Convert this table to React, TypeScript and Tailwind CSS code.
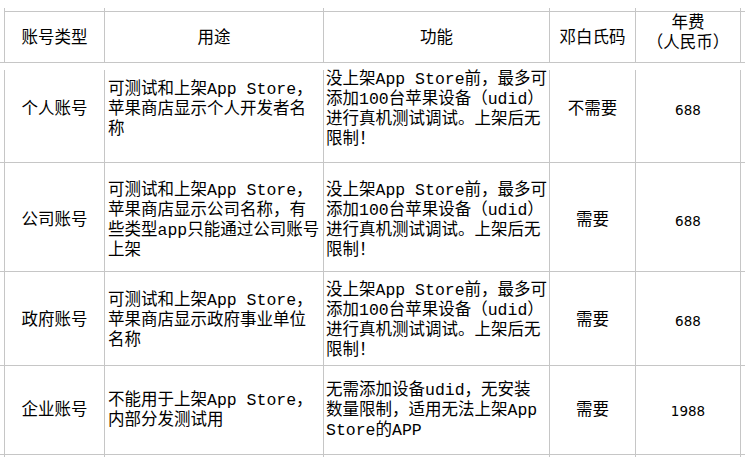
const line = 'border-[#c6c6c6]'
const cjk = "font-['Liberation_Mono','Noto_Sans_CJK_SC',monospace] text-[16.5px] leading-[20px] font-normal text-black"
const num = "font-['DejaVu_Sans',sans-serif] text-[13.5px] font-normal text-black"

type Row = {
    type: string
    use: string[]
    feature: string[]
    duns: string
    fee: string
    wrap: string
    height: string
    pad: string
}

const feature = ['没上架App Store前，最多可', '添加100台苹果设备（udid）', '进行真机测试调试。上架后无', '限制！']

const rows: Row[] = [
    {
        type: '个人账号',
        use: ['可测试和上架App Store，', '苹果商店显示个人开发者名', '称'],
        feature,
        duns: '不需要',
        fee: '688',
        wrap: 'pt-[7px]',
        height: 'h-[92px]',
        pad: 'pb-[12px]',
    },
    {
        type: '公司账号',
        use: ['可测试和上架App Store，', '苹果商店显示公司名称，有', '些类型app只能通过公司账号', '上架'],
        feature,
        duns: '需要',
        fee: '688',
        wrap: '',
        height: 'h-[108px]',
        pad: 'pt-[7px]',
    },
    {
        type: '政府账号',
        use: ['可测试和上架App Store，', '苹果商店显示政府事业单位', '名称'],
        feature,
        duns: '需要',
        fee: '688',
        wrap: '',
        height: 'h-[93px]',
        pad: 'pt-[4px]',
    },
    {
        type: '企业账号',
        use: ['不能用于上架App Store，', '内部分发测试用'],
        feature: ['无需添加设备udid，无安装', '数量限制，适用无法上架App', 'Store的APP'],
        duns: '需要',
        fee: '1988',
        wrap: '',
        height: 'h-[88px]',
        pad: 'pt-[2px]',
    },
]

function Lines({ items }: { items: string[] }) {
    return (
        <div className="flex flex-col">
            {items.map((t, i) => (
                <span key={i} className="whitespace-nowrap">{t}</span>
            ))}
        </div>
    )
}

function HeadCell({ width, last, pad, children }: { width: string; last?: boolean; pad: string; children: React.ReactNode }) {
    return (
        <div className={`flex flex-col border-l ${line} ${width} ${last ? 'border-r' : ''}`}>
            <div className="h-[3px]" />
            <div className={`flex-1 border-t ${line} flex flex-col items-center justify-center text-center ${pad}`}>
                {children}
            </div>
        </div>
    )
}

export default function App() {
    return (
        <div className={`w-[745px] h-[457px] overflow-hidden bg-white pt-[8px] ${cjk}`}>
            {/* header */}
            <div className={`border-b ${line}`}>
                <div className="flex ml-[4px] h-[54px]">
                    <HeadCell width="w-[100px]" pad="pt-[3px]">账号类型</HeadCell>
                    <HeadCell width="w-[219px]" pad="pt-[3px]">用途</HeadCell>
                    <HeadCell width="w-[226px]" pad="pt-[3px]">功能</HeadCell>
                    <HeadCell width="w-[86px]" pad="pt-[3px]">邓白氏码</HeadCell>
                    <HeadCell width="w-[106px]" pad="pb-[7px]" last>
                        <span>年费</span>
                        <span>（人民币）</span>
                    </HeadCell>
                    <div className="flex-1 flex flex-col">
                        <div className="h-[3px]" />
                        <div className={`flex-1 border-t ${line}`} />
                    </div>
                </div>
            </div>

            {rows.map((r) => (
                <div key={r.type} className={`border-b ${line} ${r.wrap}`}>
                    <div className={`flex ml-[4px] ${r.height}`}>
                        <div className={`w-[100px] border-l ${line} flex items-center justify-center ${r.pad}`}>
                            {r.type}
                        </div>
                        <div className={`w-[219px] border-l ${line} flex items-center pl-[3px] ${r.pad}`}>
                            <Lines items={r.use} />
                        </div>
                        <div className={`w-[226px] border-l ${line} flex items-center pl-[2px] ${r.pad}`}>
                            <Lines items={r.feature} />
                        </div>
                        <div className={`w-[86px] border-l ${line} flex items-center justify-center ${r.pad}`}>
                            {r.duns}
                        </div>
                        <div className={`w-[106px] border-l border-r ${line} flex items-center justify-center ${r.pad}`}>
                            <span className={num}>{r.fee}</span>
                        </div>
                    </div>
                </div>
            ))}

            {/* tail of the column lines below the last row */}
            <div className="flex ml-[4px] h-[2px]">
                <div className={`w-[100px] border-l ${line}`} />
                <div className={`w-[219px] border-l ${line}`} />
                <div className={`w-[226px] border-l ${line}`} />
                <div className={`w-[86px] border-l ${line}`} />
                <div className={`w-[106px] border-l border-r ${line}`} />
            </div>
        </div>
    )
}
